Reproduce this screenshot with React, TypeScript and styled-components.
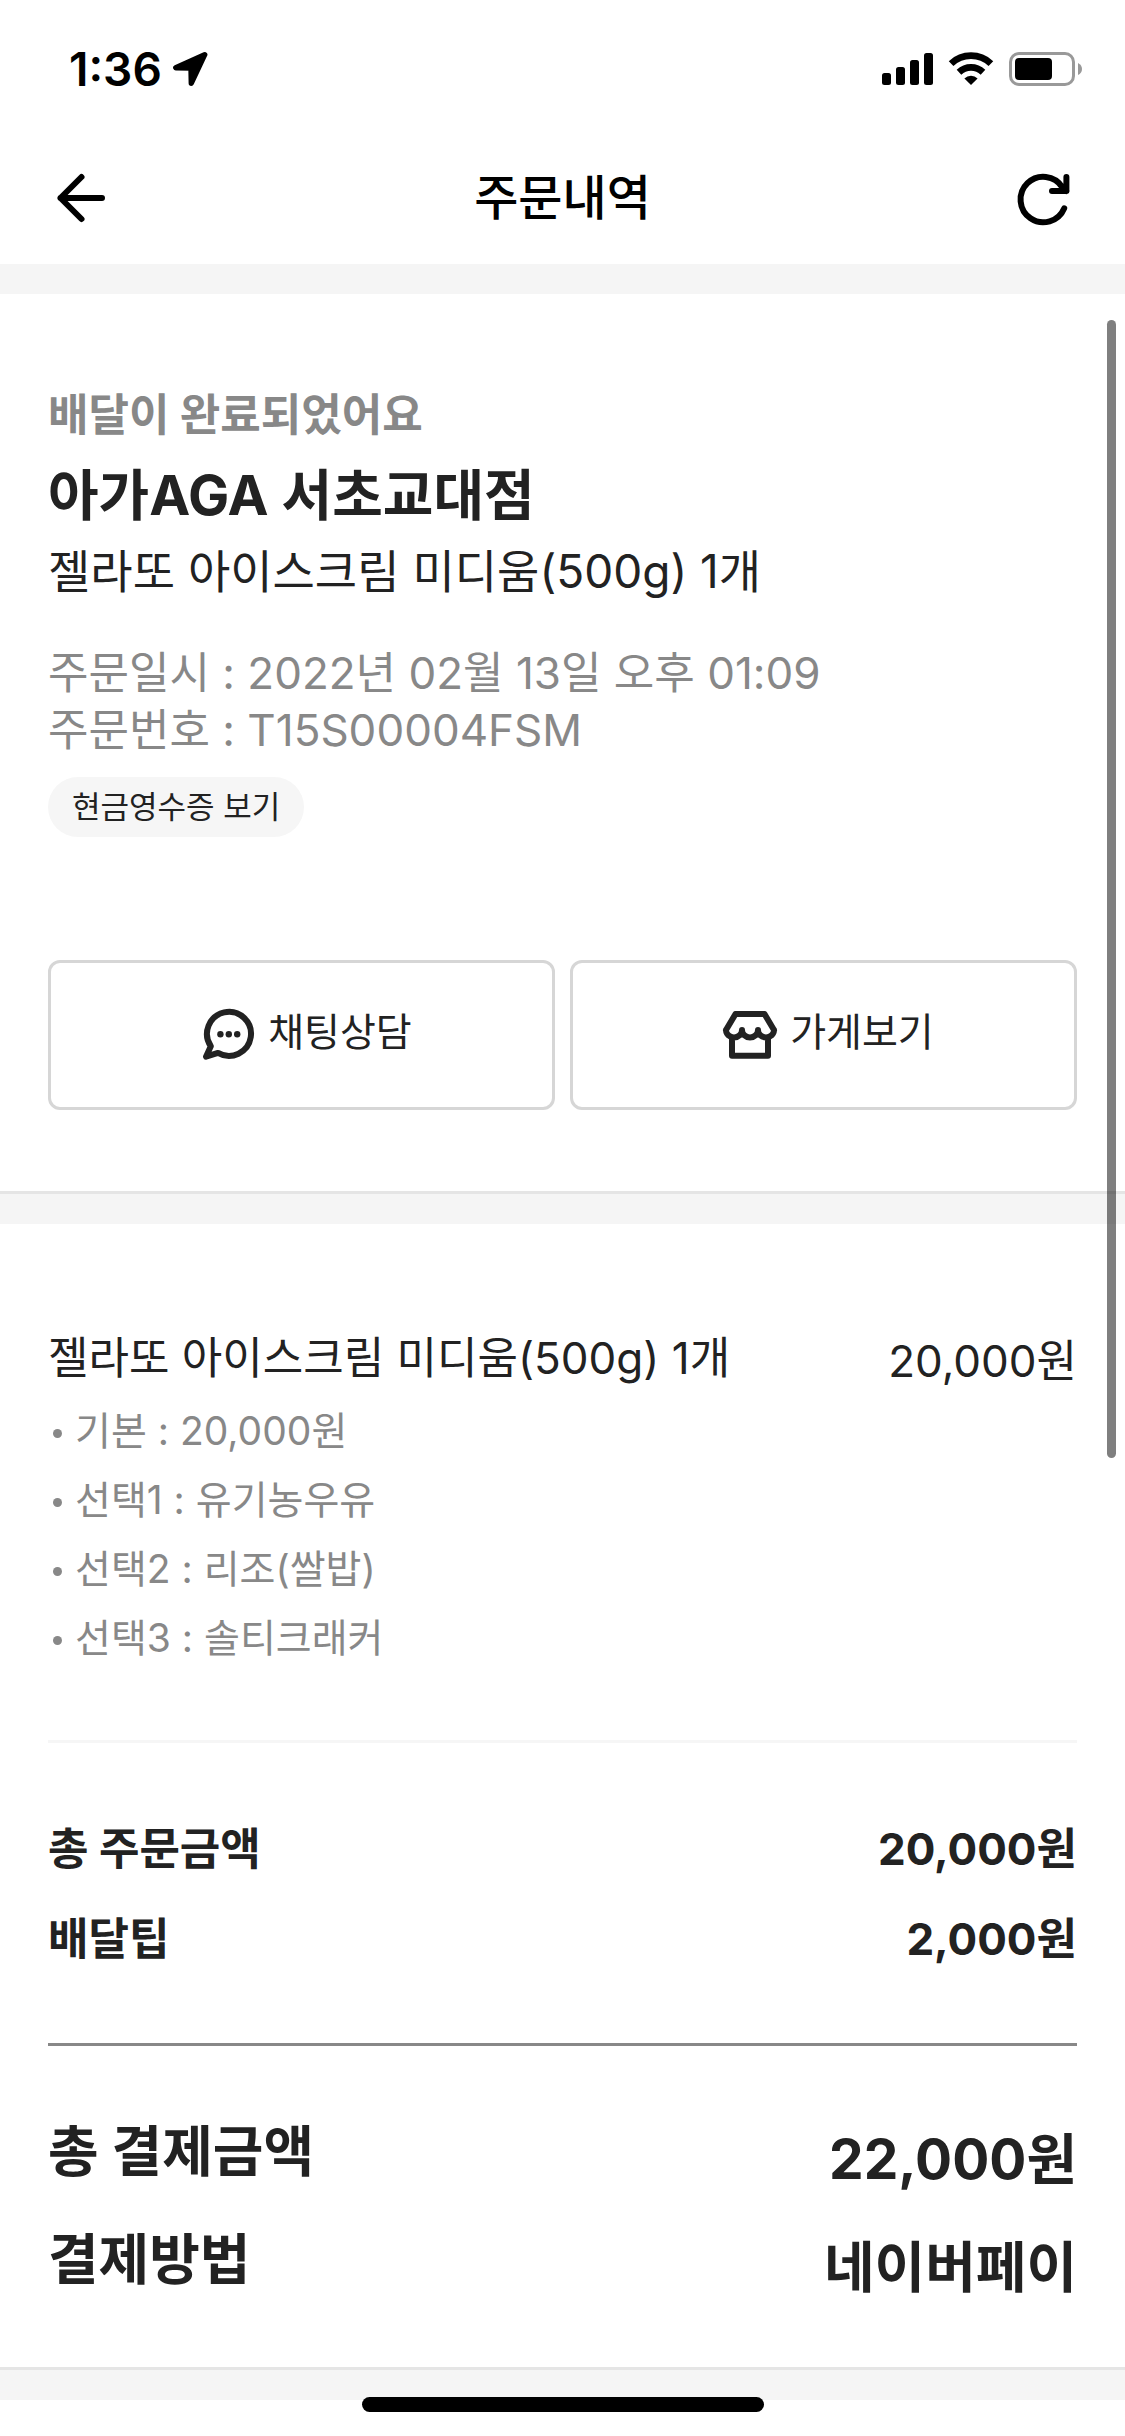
import React from "react";
import styled, { createGlobalStyle } from "styled-components";

const GlobalStyle = createGlobalStyle`
  *, *::before, *::after { box-sizing: border-box; }
  body {
    margin: 0;
    background: #fff;
    color: #222;
    font-family: Inter, "Noto Sans CJK KR", sans-serif;
    font-size: 44px;
  }
  h1, h2, p, ul, dl, dt, dd { margin: 0; padding: 0; font: inherit; }
  ul { list-style: none; }
  button { font: inherit; color: inherit; cursor: pointer; }
`;

const Screen = styled.div`
  position: relative;
  min-height: 100vh;
  padding-bottom: 36px;
`;

const StatusBar = styled.div`
  display: flex;
  align-items: center;
  justify-content: space-between;
  height: 132px;
  padding: 6px 42px 0 69px;
  color: #000;
`;

const Clock = styled.div`
  display: flex;
  align-items: center;
  gap: 10px;
  font-size: 46px;
  font-weight: 600;
`;

const Indicators = styled.div`
  display: flex;
  align-items: center;
  gap: 15px;
`;

const Header = styled.header`
  display: grid;
  grid-template-columns: 60px 1fr 60px;
  align-items: center;
  height: 132px;
  padding: 0 51px;
  color: #000;
`;

const IconButton = styled.button`
  display: flex;
  width: 60px;
  height: 60px;
  padding: 0;
  border: 0;
  background: none;
`;

const Title = styled.h1`
  font-size: 48px;
  font-weight: 500;
  line-height: 60px;
  text-align: center;
`;

const Band = styled.div<{ $ruled?: boolean }>`
  height: ${(p) => (p.$ruled ? 33 : 30)}px;
  border-top: ${(p) => (p.$ruled ? "3px solid #e5e5e5" : "0")};
  background: #f5f5f5;
`;

const Summary = styled.section`
  padding: 94px 48px 81px;
`;

const DeliveryState = styled.p`
  color: #888;
  font-weight: 700;
  line-height: 54px;
`;

const StoreName = styled.h2`
  margin: 17px 0 12px;
  font-size: 55px;
  font-weight: 700;
  line-height: 72px;
`;

const OrderedMenu = styled.p`
  font-size: 46px;
  line-height: 56px;
`;

const Meta = styled.div`
  margin: 46px 0 18px;
  color: #888;
  line-height: 57px;
`;

const Pill = styled.button`
  display: block;
  height: 60px;
  padding: 0 24px;
  border: 0;
  border-radius: 30px;
  background: #f6f6f6;
  font-size: 31px;
  line-height: 60px;
`;

const Actions = styled.div`
  display: grid;
  grid-template-columns: 1fr 1fr;
  gap: 15px;
  margin-top: 123px;
`;

const ActionButton = styled.button`
  display: flex;
  align-items: center;
  justify-content: center;
  gap: 11px;
  height: 150px;
  padding: 0 0 0 6px;
  border: 3px solid #d6d6d6;
  border-radius: 12px;
  background: #fff;
  font-size: 39px;
`;

const ActionLabel = styled.span`
  padding-bottom: 6px;
  line-height: 48px;
`;

const Receipt = styled.section`
  padding: 106px 48px 58px;
`;

const ItemRow = styled.div`
  display: flex;
  justify-content: space-between;
  line-height: 56px;
`;

const ItemPrice = styled.p`
  margin-top: 3px;
`;

const Options = styled.ul`
  margin: 7px 0 68px;
  color: #888;
  font-size: 39px;
  line-height: 69px;
`;

const Option = styled.li`
  display: flex;
  align-items: center;
  gap: 13px;
  padding-left: 5px;

  &::before {
    content: "";
    width: 9px;
    height: 9px;
    margin-top: 6px;
    border-radius: 50%;
    background: #888;
  }
`;

const Totals = styled.dl`
  padding: 61px 0 59px;
  border-top: 3px solid #f6f6f6;
  font-weight: 700;
  line-height: 90px;
`;

const TotalRow = styled.div`
  display: flex;
  justify-content: space-between;
`;

const Payment = styled.dl`
  display: grid;
  gap: 16px;
  padding-top: 63px;
  border-top: 3px solid #888;
  font-size: 55px;
  font-weight: 700;
  line-height: 84px;
`;

const PaymentValue = styled.dd`
  padding-top: 8px;
`;

const ScrollThumb = styled.div`
  position: absolute;
  top: 320px;
  right: 9px;
  width: 9px;
  height: 1138px;
  border-radius: 5px;
  background: rgba(0, 0, 0, 0.5);
`;

const HomeIndicator = styled.div`
  position: absolute;
  bottom: 24px;
  left: 50%;
  width: 402px;
  height: 15px;
  border-radius: 8px;
  background: #000;
  transform: translateX(-50%);
`;

const LocationIcon = () => (
  <svg width="36" height="36" viewBox="0 0 36 36" aria-hidden="true">
    <path d="M32.7 3.7 3.8 16.7 19 17.1 19.3 32.2Z" fill="#000" stroke="#000" strokeWidth="5.4" strokeLinejoin="round" />
  </svg>
);

const SignalIcon = () => (
  <svg width="51" height="34" viewBox="0 0 51 34" aria-hidden="true">
    <rect x="0" y="21" width="9" height="12" rx="2.5" />
    <rect x="14" y="15" width="9" height="18" rx="2.5" />
    <rect x="28" y="8" width="9" height="25" rx="2.5" />
    <rect x="42" y="1" width="9" height="32" rx="2.5" />
  </svg>
);

const WifiIcon = () => (
  <svg width="46" height="34" viewBox="0 0 46 34" aria-hidden="true">
    <path d="M3.1 11.6A29 29 0 0 1 42.9 11.6M11 20.2A17.6 17.6 0 0 1 35 20.2" fill="none" stroke="#000" strokeWidth="6.8" />
    <path d="M23 33 16.4 26.4A9.6 9.6 0 0 1 29.6 26.4Z" />
  </svg>
);

const BatteryIcon = () => (
  <svg width="74" height="34" viewBox="0 0 74 34" aria-hidden="true">
    <rect x="1.5" y="1.5" width="63" height="31" rx="8.5" fill="none" stroke="#999" strokeWidth="3" />
    <rect x="6" y="6" width="37" height="22" rx="4" />
    <path d="M69 11Q73 13 73 17T69 23Z" fill="#999" />
  </svg>
);

const BackIcon = () => (
  <svg width="60" height="60" viewBox="0 0 60 60" fill="none" stroke="#000" strokeWidth="6" strokeLinecap="round" strokeLinejoin="round" aria-hidden="true">
    <path d="M30.5 9 9.5 30 30.5 51M9.5 30H51" />
  </svg>
);

const RefreshIcon = () => (
  <svg width="60" height="60" viewBox="0 0 60 60" fill="none" stroke="#000" strokeWidth="6" strokeLinecap="round" strokeLinejoin="round" aria-hidden="true">
    <path d="M50.2 40.3A22.7 22.7 0 1 1 48.4 19.3L52.4 23M52.4 9V23H38" />
  </svg>
);

const ChatIcon = () => (
  <svg width="60" height="56" viewBox="0 0 60 56" aria-hidden="true">
    <path d="M13.8 39.2A22 22 0 1 1 21 45.9L9 49.7Z" fill="none" stroke="#222" strokeWidth="6" strokeLinejoin="round" />
    <g fill="#222">
      <circle cx="23.4" cy="27.3" r="3.2" />
      <circle cx="31.8" cy="27.3" r="3.2" />
      <circle cx="40.2" cy="27.3" r="3.2" />
    </g>
  </svg>
);

const StoreIcon = () => (
  <svg width="60" height="56" viewBox="0 0 60 56" fill="none" stroke="#222" strokeWidth="6" strokeLinecap="round" strokeLinejoin="round" aria-hidden="true">
    <path d="M7 23 16.5 7H45.5L55 23M7 23a8 7.5 0 0 0 16 0a8 7.5 0 0 0 16 0a8 7.5 0 0 0 16 0M13 31V48.7H49V31" />
  </svg>
);

const options = ["기본 : 20,000원", "선택1 : 유기농우유", "선택2 : 리조(쌀밥)", "선택3 : 솔티크래커"];

const totals = [
  { label: "총 주문금액", value: "20,000원" },
  { label: "배달팁", value: "2,000원" },
];

const payment = [
  { label: "총 결제금액", value: "22,000원" },
  { label: "결제방법", value: "네이버페이" },
];

export default function App() {
  return (
    <Screen>
      <GlobalStyle />
      <StatusBar>
        <Clock>
          1:36
          <LocationIcon />
        </Clock>
        <Indicators>
          <SignalIcon />
          <WifiIcon />
          <BatteryIcon />
        </Indicators>
      </StatusBar>
      <Header>
        <IconButton type="button" aria-label="뒤로">
          <BackIcon />
        </IconButton>
        <Title>주문내역</Title>
        <IconButton type="button" aria-label="새로고침">
          <RefreshIcon />
        </IconButton>
      </Header>
      <Band />
      <main>
        <Summary>
          <DeliveryState>배달이 완료되었어요</DeliveryState>
          <StoreName>아가AGA 서초교대점</StoreName>
          <OrderedMenu>젤라또 아이스크림 미디움(500g) 1개</OrderedMenu>
          <Meta>
            <p>주문일시 : 2022년 02월 13일 오후 01:09</p>
            <p>주문번호 : T15S00004FSM</p>
          </Meta>
          <Pill type="button">현금영수증 보기</Pill>
          <Actions>
            <ActionButton type="button">
              <ChatIcon />
              <ActionLabel>채팅상담</ActionLabel>
            </ActionButton>
            <ActionButton type="button">
              <StoreIcon />
              <ActionLabel>가게보기</ActionLabel>
            </ActionButton>
          </Actions>
        </Summary>
        <Band $ruled />
        <Receipt>
          <ItemRow>
            <p>젤라또 아이스크림 미디움(500g) 1개</p>
            <ItemPrice>20,000원</ItemPrice>
          </ItemRow>
          <Options>
            {options.map((text) => (
              <Option key={text}>{text}</Option>
            ))}
          </Options>
          <Totals>
            {totals.map((row) => (
              <TotalRow key={row.label}>
                <dt>{row.label}</dt>
                <dd>{row.value}</dd>
              </TotalRow>
            ))}
          </Totals>
          <Payment>
            {payment.map((row) => (
              <TotalRow key={row.label}>
                <dt>{row.label}</dt>
                <PaymentValue>{row.value}</PaymentValue>
              </TotalRow>
            ))}
          </Payment>
        </Receipt>
        <Band $ruled />
      </main>
      <ScrollThumb />
      <HomeIndicator />
    </Screen>
  );
}
